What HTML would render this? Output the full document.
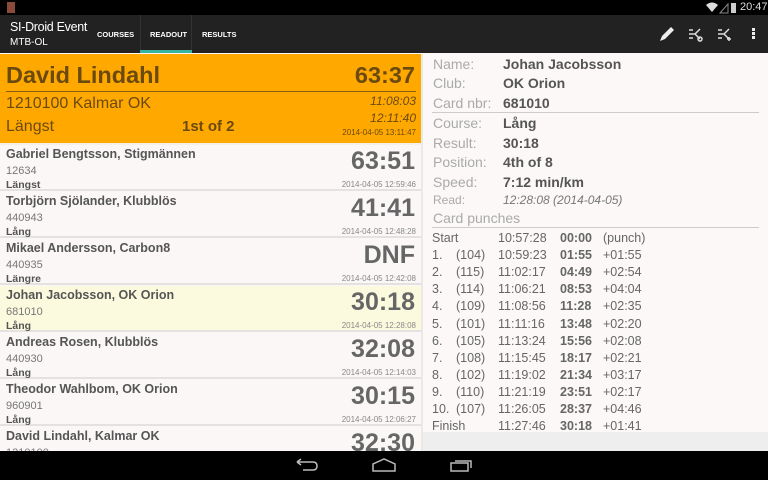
<!DOCTYPE html>
<html><head><meta charset="utf-8"><style>
*{margin:0;padding:0;box-sizing:border-box}
body{width:768px;height:480px;overflow:hidden;background:#faf7f6;font-family:"Liberation Sans",sans-serif;position:relative}
.abs{position:absolute;white-space:nowrap}
#status{left:0;top:0;width:768px;height:15px;background:#000}
#bar{left:0;top:15px;width:768px;height:38px;background:#222}
#nav{left:0;top:451px;width:768px;height:29px;background:#000}
#hdr{left:0;top:54px;width:421px;height:89px;background:#ffa800;color:#6b4a10}
.row{position:absolute;left:0;width:421px;height:46px;border-bottom:2px solid #e4e2e1;color:#555}
.row .n{position:absolute;left:6px;top:2px;font-size:12.5px;font-weight:bold}
.row .c{position:absolute;left:6px;top:20px;font-size:11px;color:#777}
.row .k{position:absolute;left:6px;top:34px;font-size:10.5px;font-weight:bold}
.row .t{position:absolute;right:6px;top:2px;font-size:25px;font-weight:bold;color:#666}
.row .d{position:absolute;right:5px;top:35px;font-size:8px;color:#888}
#right{left:423px;top:54px;width:345px;height:378px;background:#fbf8f7}
.l{position:absolute;left:10px;font-size:14px;color:#aaa}
.v{position:absolute;left:80px;font-size:14px;font-weight:bold;color:#555}
.p{position:absolute;font-size:12.5px;color:#666}
</style></head><body>
<div class="abs" id="status">
<div class="abs" style="left:7px;top:2px;width:8px;height:11px;background:#8a4a3a"></div>
<svg class="abs" style="left:706px;top:2px" width="30" height="12"><path d="M0 3 Q6 -2 12 3 L6 10Z" fill="#ddd"/><path d="M14 11 L22 2 L22 11Z" fill="none" stroke="#888"/><rect x="25" y="1" width="5" height="10" fill="#ccc"/></svg>
<div class="abs" style="left:740px;top:1px;color:#ddd;font-size:11px">20:47</div>
</div>
<div class="abs" id="bar">
<div class="abs" style="left:10px;top:5px;color:#fff;font-size:12.5px;letter-spacing:-0.3px">SI-Droid Event</div>
<div class="abs" style="left:10px;top:22px;color:#fff;font-size:10px">MTB-OL</div>
<div class="abs" style="left:97px;top:15px;color:#fff;font-size:7.5px;font-weight:bold">COURSES</div>
<div class="abs" style="left:140px;top:0;width:52px;height:38px;border-left:1px solid #333;border-right:1px solid #333"></div>
<div class="abs" style="left:150px;top:15px;color:#fff;font-size:7.5px;font-weight:bold">READOUT</div>
<div class="abs" style="left:140px;top:35px;width:52px;height:3px;background:#33b5a0"></div>
<div class="abs" style="left:202px;top:15px;color:#fff;font-size:7.5px;font-weight:bold">RESULTS</div>
<svg class="abs" style="left:658px;top:10px" width="18" height="18"><path d="M2 16 L4 11 L13 2 L16 5 L7 14Z" fill="#eee"/></svg>
<svg class="abs" style="left:688px;top:11px" width="16" height="16" stroke="#ddd" fill="none" stroke-width="1.5"><path d="M1 8 L7 8 L12 3 M7 8 L12 13 M1 4 L5 4 M1 12 L5 12"/><circle cx="12" cy="13" r="2"/></svg>
<svg class="abs" style="left:717px;top:11px" width="16" height="16" stroke="#ddd" fill="none" stroke-width="1.5"><path d="M1 8 L7 8 L12 3 M7 8 L12 13 M1 4 L5 4 M1 12 L5 12 M12 11 L12 15 M10 13 L14 13"/></svg>
<div class="abs" style="left:752px;top:13px;width:3px;height:3px;background:#eee;box-shadow:0 4px 0 #eee,0 8px 0 #eee"></div>
</div>
<div class="abs" id="hdr">
<div class="abs" style="left:6px;top:8px;font-size:23.5px;font-weight:bold">David Lindahl</div>
<div class="abs" style="right:6px;top:8px;font-size:23.5px;font-weight:bold">63:37</div>
<div class="abs" style="left:6px;top:37px;width:410px;height:1px;background:#8a5f10"></div>
<div class="abs" style="left:6px;top:41px;font-size:16px">1210100 Kalmar OK</div>
<div class="abs" style="right:5px;top:40px;font-size:12px;font-style:italic">11:08:03</div>
<div class="abs" style="left:6px;top:64px;font-size:16px">Längst</div>
<div class="abs" style="left:182px;top:64px;font-size:15px;font-weight:bold">1st of 2</div>
<div class="abs" style="right:5px;top:57px;font-size:12px;font-style:italic">12:11:40</div>
<div class="abs" style="right:5px;top:74px;font-size:8px">2014-04-05 13:11:47</div>
</div>
<div class="abs" style="left:0;top:143px;width:421px;height:2px;background:#f3efe9"></div>
<div class="row" style="top:145px"><div class="n">Gabriel Bengtsson, Stigmännen</div><div class="c">12634</div><div class="k">Längst</div><div class="t">63:51</div><div class="d">2014-04-05 12:59:46</div></div>
<div class="row" style="top:192px"><div class="n">Torbjörn Sjölander, Klubblös</div><div class="c">440943</div><div class="k">Lång</div><div class="t">41:41</div><div class="d">2014-04-05 12:48:28</div></div>
<div class="row" style="top:239px"><div class="n">Mikael Andersson, Carbon8</div><div class="c">440935</div><div class="k">Längre</div><div class="t">DNF</div><div class="d">2014-04-05 12:42:08</div></div>
<div class="row" style="top:286px;background:#fcfade"><div class="n">Johan Jacobsson, OK Orion</div><div class="c">681010</div><div class="k">Lång</div><div class="t">30:18</div><div class="d">2014-04-05 12:28:08</div></div>
<div class="row" style="top:333px"><div class="n">Andreas Rosen, Klubblös</div><div class="c">440930</div><div class="k">Lång</div><div class="t">32:08</div><div class="d">2014-04-05 12:14:03</div></div>
<div class="row" style="top:380px"><div class="n">Theodor Wahlbom, OK Orion</div><div class="c">960901</div><div class="k">Lång</div><div class="t">30:15</div><div class="d">2014-04-05 12:06:27</div></div>
<div class="row" style="top:427px;border:none"><div class="n">David Lindahl, Kalmar OK</div><div class="c">1210100</div><div class="t">32:30</div></div>
<div class="abs" style="left:421px;top:54px;width:2px;height:397px;background:#ece8e6"></div>
<div class="abs" id="right">
<div class="l" style="top:2px">Name:</div><div class="v" style="top:2px">Johan Jacobsson</div>
<div class="l" style="top:21px">Club:</div><div class="v" style="top:21px">OK Orion</div>
<div class="l" style="top:41px">Card nbr:</div><div class="v" style="top:41px">681010</div>
<div class="abs" style="left:9px;top:58px;width:327px;height:1px;background:#ccc"></div>
<div class="l" style="top:61px">Course:</div><div class="v" style="top:61px">Lång</div>
<div class="l" style="top:81px">Result:</div><div class="v" style="top:81px">30:18</div>
<div class="l" style="top:100px">Position:</div><div class="v" style="top:100px">4th of 8</div>
<div class="l" style="top:120px">Speed:</div><div class="v" style="top:120px">7:12 min/km</div>
<div class="l" style="top:139px;font-size:12px">Read:</div><div class="v" style="top:139px;font-size:12px;font-weight:normal;font-style:italic;color:#777">12:28:08 (2014-04-05)</div>
<div class="l" style="top:156px">Card punches</div>
<div class="abs" style="left:9px;top:173px;width:327px;height:1px;background:#ccc"></div>
<div id="pp"></div>
</div>
<div class="abs" style="left:423px;top:432px;width:345px;height:19px;background:#eee"></div>
<div class="abs" id="nav">
<svg class="abs" style="left:295px;top:7px" width="24" height="14" fill="none" stroke="#bbb" stroke-width="1.5"><path d="M2 4 L18 4 Q22 4 22 8 Q22 12 18 12 L8 12 M2 4 L6 1 M2 4 L6 7"/></svg>
<svg class="abs" style="left:372px;top:7px" width="24" height="14" fill="none" stroke="#bbb" stroke-width="1.5"><path d="M1 13 L1 6 L12 1 L23 6 L23 13Z"/></svg>
<svg class="abs" style="left:450px;top:7px" width="24" height="14" fill="none" stroke="#bbb" stroke-width="1.5"><rect x="1" y="5" width="17" height="8"/><path d="M5 3 L21 3 L21 10"/></svg>
</div>
<script>
var d=[["Start","","10:57:28","00:00","(punch)"],["1.","(104)","10:59:23","01:55","+01:55"],["2.","(115)","11:02:17","04:49","+02:54"],["3.","(114)","11:06:21","08:53","+04:04"],["4.","(109)","11:08:56","11:28","+02:35"],["5.","(101)","11:11:16","13:48","+02:20"],["6.","(105)","11:13:24","15:56","+02:08"],["7.","(108)","11:15:45","18:17","+02:21"],["8.","(102)","11:19:02","21:34","+03:17"],["9.","(110)","11:21:19","23:51","+02:17"],["10.","(107)","11:26:05","28:37","+04:46"],["Finish","","11:27:46","30:18","+01:41"]];
var h="";d.forEach(function(r,i){var y=177+i*17.1;h+='<div class="p" style="left:9px;top:'+y+'px">'+r[0]+'</div><div class="p" style="left:33px;top:'+y+'px">'+r[1]+'</div><div class="p" style="left:75px;top:'+y+'px">'+r[2]+'</div><div class="p" style="left:137px;top:'+y+'px;font-weight:bold">'+r[3]+'</div><div class="p" style="left:180px;top:'+y+'px">'+r[4]+'</div>';});
document.getElementById("pp").innerHTML=h;
</script>
</body></html>
